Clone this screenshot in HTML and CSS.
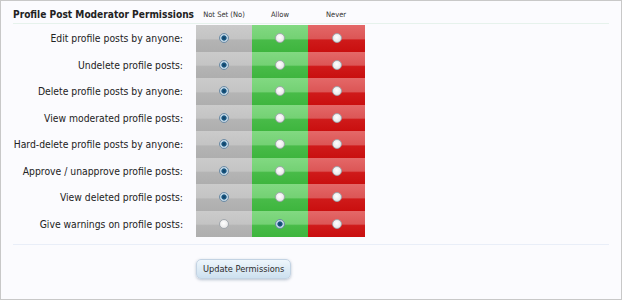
FILE: index.html
```html
<!DOCTYPE html>
<html lang="en">
<head>
  <meta charset="UTF-8">
  <title>Profile Post Moderator Permissions</title>
  <link rel="stylesheet" href="styles.css">
</head>
<body class="pm-body">

<form class="pm-frame">
  <div class="pm-header">
    <h3 class="pm-title">Profile Post Moderator Permissions</h3>
    <div class="pm-col-title">Not Set (No)</div>
    <div class="pm-col-title">Allow</div>
    <div class="pm-col-title">Never</div>
  </div>

  <div class="pm-rows">
    <div class="pm-row">
      <div class="pm-label">Edit profile posts by anyone:</div>
      <label class="pm-cell pm-unset"><input class="pm-radio" type="radio" name="p1" checked></label>
      <label class="pm-cell pm-allow"><input class="pm-radio" type="radio" name="p1"></label>
      <label class="pm-cell pm-never"><input class="pm-radio" type="radio" name="p1"></label>
    </div>
    <div class="pm-row">
      <div class="pm-label">Undelete profile posts:</div>
      <label class="pm-cell pm-unset"><input class="pm-radio" type="radio" name="p2" checked></label>
      <label class="pm-cell pm-allow"><input class="pm-radio" type="radio" name="p2"></label>
      <label class="pm-cell pm-never"><input class="pm-radio" type="radio" name="p2"></label>
    </div>
    <div class="pm-row">
      <div class="pm-label">Delete profile posts by anyone:</div>
      <label class="pm-cell pm-unset"><input class="pm-radio" type="radio" name="p3" checked></label>
      <label class="pm-cell pm-allow"><input class="pm-radio" type="radio" name="p3"></label>
      <label class="pm-cell pm-never"><input class="pm-radio" type="radio" name="p3"></label>
    </div>
    <div class="pm-row">
      <div class="pm-label">View moderated profile posts:</div>
      <label class="pm-cell pm-unset"><input class="pm-radio" type="radio" name="p4" checked></label>
      <label class="pm-cell pm-allow"><input class="pm-radio" type="radio" name="p4"></label>
      <label class="pm-cell pm-never"><input class="pm-radio" type="radio" name="p4"></label>
    </div>
    <div class="pm-row">
      <div class="pm-label">Hard-delete profile posts by anyone:</div>
      <label class="pm-cell pm-unset"><input class="pm-radio" type="radio" name="p5" checked></label>
      <label class="pm-cell pm-allow"><input class="pm-radio" type="radio" name="p5"></label>
      <label class="pm-cell pm-never"><input class="pm-radio" type="radio" name="p5"></label>
    </div>
    <div class="pm-row">
      <div class="pm-label">Approve / unapprove profile posts:</div>
      <label class="pm-cell pm-unset"><input class="pm-radio" type="radio" name="p6" checked></label>
      <label class="pm-cell pm-allow"><input class="pm-radio" type="radio" name="p6"></label>
      <label class="pm-cell pm-never"><input class="pm-radio" type="radio" name="p6"></label>
    </div>
    <div class="pm-row">
      <div class="pm-label">View deleted profile posts:</div>
      <label class="pm-cell pm-unset"><input class="pm-radio" type="radio" name="p7" checked></label>
      <label class="pm-cell pm-allow"><input class="pm-radio" type="radio" name="p7"></label>
      <label class="pm-cell pm-never"><input class="pm-radio" type="radio" name="p7"></label>
    </div>
    <div class="pm-row">
      <div class="pm-label">Give warnings on profile posts:</div>
      <label class="pm-cell pm-unset"><input class="pm-radio" type="radio" name="p8"></label>
      <label class="pm-cell pm-allow"><input class="pm-radio" type="radio" name="p8" checked></label>
      <label class="pm-cell pm-never"><input class="pm-radio" type="radio" name="p8"></label>
    </div>
  </div>

  <div class="pm-submit">
    <button class="pm-button" type="button">Update Permissions</button>
  </div>
</form>

</body>
</html>
```

FILE: styles.css
```css
/* base */
.pm-body {
  margin: 0;
  padding: 0;
  background: #fff;
  font-family: "DejaVu Sans Condensed", "DejaVu Sans", sans-serif;
  font-stretch: condensed;
  color: #222;
}

.pm-frame {
  box-sizing: border-box;
  width: 622px;
  height: 300px;
  margin: 0;
  padding: 4px 12px 0 12px;
  border: 1px solid #c8c8c8;
  background: #fbfbfe;
}

/* header */
.pm-header {
  display: flex;
  align-items: center;
  height: 18px;
  border-bottom: 1px solid #e6f2ec;
}

.pm-title {
  width: 183px;
  margin: 0;
  font-size: 10.1px;
  font-weight: bold;
  color: #222;
  white-space: nowrap;
}

.pm-col-title {
  width: 56px;
  font-size: 7.5px;
  text-align: center;
  color: #333;
}

/* rows */
.pm-rows {
  padding-top: 1px;
}

.pm-row {
  display: flex;
  height: 26.5px;
}

.pm-label {
  width: 170px;
  padding-right: 13px;
  align-self: center;
  text-align: right;
  font-size: 10.3px;
  white-space: nowrap;
}

.pm-cell {
  display: flex;
  width: 56px;
  align-items: center;
  justify-content: center;
}

.pm-cell:last-child {
  width: 57px;
}

.pm-unset {
  background: linear-gradient(#cbcbcb 0, #c4c4c4 50%, #b4b4b4 56%, #aeaeae 100%);
}

.pm-allow {
  background: linear-gradient(#82d982 0, #74d174 50%, #48bb48 56%, #3eb53e 100%);
}

.pm-never {
  background: linear-gradient(#e46868 0, #dc5656 50%, #cf1a1a 56%, #c90f0f 100%);
}

/* radios */
.pm-radio {
  appearance: none;
  -webkit-appearance: none;
  box-sizing: border-box;
  width: 10px;
  height: 10px;
  margin: 0;
  border: 1px solid #a2a8ae;
  border-radius: 50%;
  background: radial-gradient(circle at 45% 40%, #ffffff 0, #ececec 60%, #d2d2d2 100%);
}

.pm-radio:checked {
  border-color: #6d8ca6;
  background: radial-gradient(circle at 50% 50%, #0d3b5e 0, #1f5f8a 40%, #b7cfe0 52%, #e8f0f6 100%);
}

/* submit */
.pm-submit {
  margin-top: 7px;
  padding: 12px 0 0 183px;
  border-top: 1px solid #e9eef8;
}

.pm-button {
  height: 20px;
  padding: 0 6px;
  border: 1px solid #c3d3e3;
  border-radius: 5px;
  background: linear-gradient(#eef6fc, #cde0ef);
  box-shadow: 0 1px 3px rgba(60, 90, 120, .35);
  font-family: "DejaVu Sans Condensed", "DejaVu Sans", sans-serif;
  font-stretch: condensed;
  font-size: 9.2px;
  color: #2a2a2a;
}
```
